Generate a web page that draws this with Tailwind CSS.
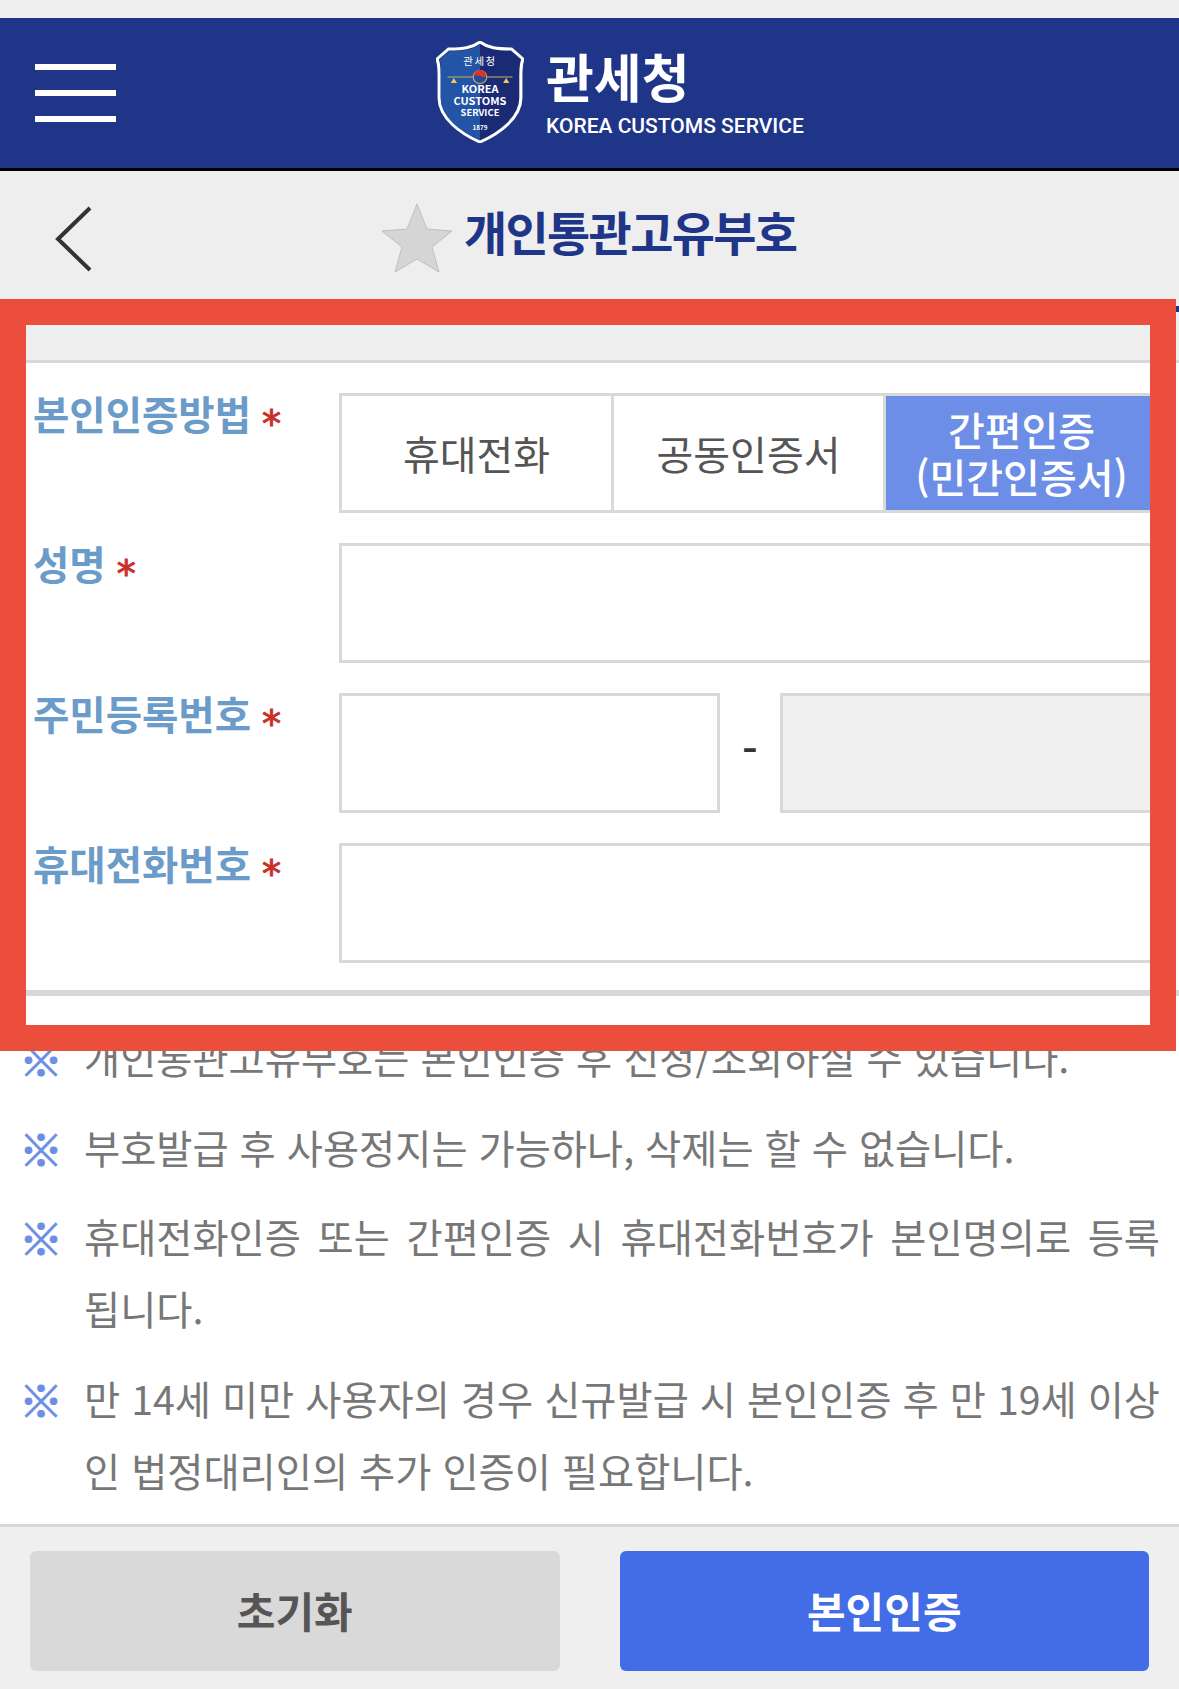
<!DOCTYPE html>
<html lang="ko">

<head>
    <meta charset="utf-8" />
    <meta content="width=device-width, initial-scale=1.0" name="viewport" />
    <title>개인통관고유부호</title>
    <script src="https://cdn.jsdelivr.net/npm/@tailwindcss/browser@4"></script>
</head>

<body class="relative h-[1689px] overflow-hidden bg-white font-['Noto_Sans_CJK_KR',sans-serif]">
    <div class="h-[18px] bg-[#efefef]"></div>

    <!-- Header -->
    <header class="flex h-[153px] items-center border-b-[3px] border-black bg-[#1f3587]">
        <div class="ml-[35px] flex w-[81px] flex-col gap-[20px]">
            <span class="h-[6px] bg-white"></span>
            <span class="h-[6px] bg-white"></span>
            <span class="h-[6px] bg-white"></span>
        </div>
        <svg class="mb-[2px] ml-[320px] h-[102px] w-[88px]" viewBox="2 1 84 102" preserveAspectRatio="none">
            <path d="M44 2 C52 8 60 9 74 9 L85 19 C83 24 83 28 83 36 L83 58 C83 78 62 94 44 102 C26 94 5 78 5 58 L5 36 C5 28 5 24 3 19 L14 9 C28 9 36 8 44 2 Z" fill="#1b2a75" stroke="#fff" stroke-width="3" />
            <path d="M44 4 C36 10 28 11 15 11 L5.500 19.500 C7 24 6.500 28 6.500 36 L6.500 58 C6.500 77 26 92 44 100 Z" fill="#2354a5" />
            <text x="44" y="25" fill="#fff" font-size="10" text-anchor="middle" letter-spacing="1.500">관세청</text>
            <path d="M13 37 H75" stroke="#c9b458" stroke-width="1.200" />
            <circle cx="44" cy="37" r="6.500" fill="#234a9c" stroke="#c9b458" stroke-width="1" />
            <path d="M38 36 A6 6 0 0 1 50 36 C47 39 44 34 38 36 Z" fill="#d9342b" />
            <path d="M16 43 h6 l-3 -5 Z M66 43 h6 l-3 -5 Z" fill="#f2c94c" />
            <text x="44" y="53" fill="#fff" font-size="10.500" font-weight="700" text-anchor="middle">KOREA</text>
            <text x="44" y="65" fill="#fff" font-size="10.500" font-weight="700" text-anchor="middle">CUSTOMS</text>
            <text x="44" y="76" fill="#fff" font-size="9" font-weight="700" text-anchor="middle">SERVICE</text>
            <text x="44" y="90" fill="#fff" font-size="6" font-weight="700" text-anchor="middle">1879</text>
        </svg>
        <div class="ml-[22px] flex flex-col text-white">
            <span class="text-[52px] leading-[56px] font-bold">관세청</span>
            <span class="mt-[9px] font-['Roboto',sans-serif] text-[21px] leading-[26px] font-medium">KOREA CUSTOMS SERVICE</span>
        </div>
    </header>

    <!-- Title -->
    <div class="flex h-[135px] items-center bg-[#eeeeee]">
        <svg class="ml-[55px] h-[66px] w-[37px]" viewBox="0 0 37 66">
            <path d="M35 2 L3 33 L35 64" fill="none" stroke="#333" stroke-width="4" />
        </svg>
        <svg class="mb-[2px] ml-[289px] h-[70px] w-[72px]" viewBox="0 0 72 70">
            <path d="M36 1 L46 26 L71 28 L51 44 L58 69 L36 56 L14 69 L21 44 L1 28 L26 26 Z" fill="#d5d5d5" stroke="#bfbfbf" stroke-width="1" />
        </svg>
        <h1 class="mb-[17px] ml-[11px] text-[47px] leading-none font-bold tracking-[-1.700px] text-[#1f3587]">개인통관고유부호</h1>
    </div>
    <div class="h-[6px] bg-[#1f3587]"></div>
    <div class="h-[51px] border-b-[3px] border-[#d8d8dc] bg-[#efefef]"></div>

    <!-- Form -->
    <form class="flex flex-col gap-[30px] pt-[30px] pr-[19px] pb-[27px] pl-[33px]">
        <div class="flex">
            <label class="-mt-[2px] w-[306px] text-[39.500px] leading-[44px] font-semibold text-[#6b9bc8]">본인인증방법 <span class="inline-block translate-y-[7px] font-['DejaVu_Sans',sans-serif] text-[38px] leading-[44px] font-normal text-[#c9302c] [-webkit-text-stroke:1px_#c9302c]">*</span></label>
            <div class="flex h-[120px] flex-1 border-[3px] border-[#d9d9d9] text-center text-[40px]">
                <div class="flex w-[272px] items-center justify-center border-r-[3px] border-[#d9d9d9] text-[#555555]">휴대전화</div>
                <div class="flex w-[272px] items-center justify-center border-r-[3px] border-[#d9d9d9] text-[#555555]">공동인증서</div>
                <div class="flex flex-1 items-center justify-center bg-[#6d8ee6] leading-[47px] font-medium text-white">간편인증<br />(민간인증서)</div>
            </div>
        </div>
        <div class="flex">
            <label class="-mt-[2px] w-[306px] text-[39.500px] leading-[44px] font-semibold text-[#6b9bc8]">성명 <span class="inline-block translate-y-[7px] font-['DejaVu_Sans',sans-serif] text-[38px] leading-[44px] font-normal text-[#c9302c] [-webkit-text-stroke:1px_#c9302c]">*</span></label>
            <input type="text" class="h-[120px] flex-1 border-[3px] border-[#d9d9d9]" />
        </div>
        <div class="flex">
            <label class="-mt-[2px] w-[306px] text-[39.500px] leading-[44px] font-semibold text-[#6b9bc8]">주민등록번호 <span class="inline-block translate-y-[7px] font-['DejaVu_Sans',sans-serif] text-[38px] leading-[44px] font-normal text-[#c9302c] [-webkit-text-stroke:1px_#c9302c]">*</span></label>
            <div class="flex flex-1 items-center">
                <input type="text" class="h-[120px] w-[381px] border-[3px] border-[#d9d9d9]" />
                <span class="mb-[10px] w-[60px] text-center text-[44px] font-medium text-[#333333]">-</span>
                <input type="text" disabled class="h-[120px] flex-1 border-[3px] border-[#d9d9d9] bg-[#f0f0f0]" />
            </div>
        </div>
        <div class="flex">
            <label class="-mt-[2px] w-[306px] text-[39.500px] leading-[44px] font-semibold text-[#6b9bc8]">휴대전화번호 <span class="inline-block translate-y-[7px] font-['DejaVu_Sans',sans-serif] text-[38px] leading-[44px] font-normal text-[#c9302c] [-webkit-text-stroke:1px_#c9302c]">*</span></label>
            <input type="text" class="h-[120px] flex-1 border-[3px] border-[#d9d9d9]" />
        </div>
    </form>
    <div class="h-[6px] bg-[#d8d8dc]"></div>

    <!-- Notes -->
    <ul class="flex h-[528px] flex-col gap-[17.500px] pt-[25px] pr-[19px] pl-[19px] text-[39.300px] leading-[72px] text-[#777777]">
        <li class="flex"><span class="w-[65px] shrink-0 translate-y-[1px] text-[44px] font-bold text-[#6d8ee6] [-webkit-text-stroke:1px_#6d8ee6]">※</span><p class="flex-1 text-justify break-all">개인통관고유부호는 본인인증 후 신청/조회하실 수 있습니다.</p></li>
        <li class="flex"><span class="w-[65px] shrink-0 translate-y-[1px] text-[44px] font-bold text-[#6d8ee6] [-webkit-text-stroke:1px_#6d8ee6]">※</span><p class="flex-1 text-justify break-all">부호발급 후 사용정지는 가능하나, 삭제는 할 수 없습니다.</p></li>
        <li class="flex"><span class="w-[65px] shrink-0 translate-y-[1px] text-[44px] font-bold text-[#6d8ee6] [-webkit-text-stroke:1px_#6d8ee6]">※</span><p class="flex-1 text-justify break-all">휴대전화인증 또는 간편인증 시 휴대전화번호가 본인명의로 등록됩니다.</p></li>
        <li class="flex"><span class="w-[65px] shrink-0 translate-y-[1px] text-[44px] font-bold text-[#6d8ee6] [-webkit-text-stroke:1px_#6d8ee6]">※</span><p class="flex-1 text-justify break-all">만 14세 미만 사용자의 경우 신규발급 시 본인인증 후 만 19세 이상인 법정대리인의 추가 인증이 필요합니다.</p></li>
    </ul>

    <!-- Footer buttons -->
    <footer class="flex h-[165px] gap-[60px] border-t-[3px] border-[#d8d8dc] bg-[#efefef] px-[30px] pt-[24px]">
        <button type="button" class="h-[120px] flex-1 rounded-[6px] bg-[#d9d9d9] pb-[4px] text-[42px] font-bold text-[#555555]">초기화</button>
        <button type="button" class="h-[120px] flex-1 rounded-[6px] bg-[#426de6] pb-[4px] text-[42px] font-bold text-white">본인인증</button>
    </footer>

    <!-- Red annotation box -->
    <div class="pointer-events-none absolute top-[299px] left-0 h-[752px] w-[1176px] border-[26px] border-[#ec4e3e]"></div>
</body>

</html>
